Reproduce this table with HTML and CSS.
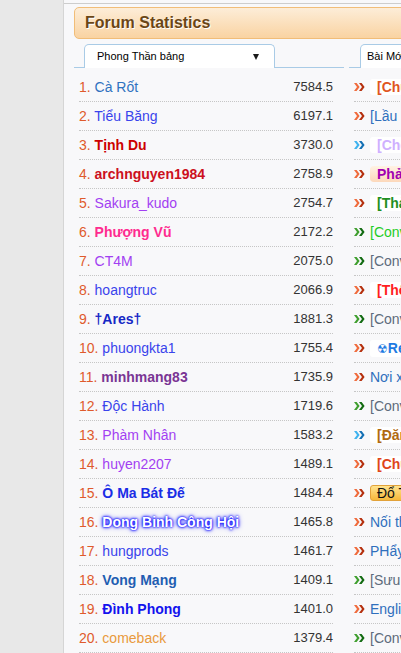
FILE: index.html
```html
<!DOCTYPE html>
<html lang="vi">
<head>
<meta charset="utf-8">
<title>Forum Statistics</title>
<link rel="stylesheet" href="styles.css">
</head>
<body>
<div class="page">
  <aside class="sidebar"></aside>
  <main class="content">
    <div class="content-inner">
      <div class="panel-head"><h2 class="panel-title">Forum Statistics</h2></div>
      <div class="cols">
        <section class="col col-rank">
          <div class="tabbar"><div class="tab tab-rank"><span>Phong Thần bảng</span><span class="caret"></span></div></div>
          <ol class="list list-rank">
            <li class="row"><span><span class="rank">1.</span> <a class="name u-steel">Cà Rốt</a></span><span class="score">7584.5</span></li>
            <li class="row"><span><span class="rank">2.</span> <a class="name u-blue">Tiểu Băng</a></span><span class="score">6197.1</span></li>
            <li class="row"><span><span class="rank">3.</span> <a class="name u-red b">Tịnh Du</a></span><span class="score">3730.0</span></li>
            <li class="row"><span><span class="rank">4.</span> <a class="name u-red2 b">archnguyen1984</a></span><span class="score">2758.9</span></li>
            <li class="row"><span><span class="rank">5.</span> <a class="name u-purple">Sakura_kudo</a></span><span class="score">2754.7</span></li>
            <li class="row"><span><span class="rank">6.</span> <a class="name u-pink b">Phượng Vũ</a></span><span class="score">2172.2</span></li>
            <li class="row"><span><span class="rank">7.</span> <a class="name u-purple">CT4M</a></span><span class="score">2075.0</span></li>
            <li class="row"><span><span class="rank">8.</span> <a class="name u-blue">hoangtruc</a></span><span class="score">2066.9</span></li>
            <li class="row"><span><span class="rank">9.</span> <a class="name u-navy b">†Ares†</a></span><span class="score">1881.3</span></li>
            <li class="row"><span><span class="rank">10.</span> <a class="name u-blue">phuongkta1</a></span><span class="score">1755.4</span></li>
            <li class="row"><span><span class="rank">11.</span> <a class="name u-plum b">minhmang83</a></span><span class="score">1735.9</span></li>
            <li class="row"><span><span class="rank">12.</span> <a class="name u-blue">Độc Hành</a></span><span class="score">1719.6</span></li>
            <li class="row"><span><span class="rank">13.</span> <a class="name u-purple">Phàm Nhân</a></span><span class="score">1583.2</span></li>
            <li class="row"><span><span class="rank">14.</span> <a class="name u-purple">huyen2207</a></span><span class="score">1489.1</span></li>
            <li class="row"><span><span class="rank">15.</span> <a class="name u-royal b">Ô Ma Bát Đế</a></span><span class="score">1484.4</span></li>
            <li class="row"><span><span class="rank">16.</span> <a class="name u-glow">Dong Binh Công Hội</a></span><span class="score">1465.8</span></li>
            <li class="row"><span><span class="rank">17.</span> <a class="name u-blue">hungprods</a></span><span class="score">1461.7</span></li>
            <li class="row"><span><span class="rank">18.</span> <a class="name u-sky b">Vong Mạng</a></span><span class="score">1409.1</span></li>
            <li class="row"><span><span class="rank">19.</span> <a class="name u-royal2 b">Đình Phong</a></span><span class="score">1401.0</span></li>
            <li class="row"><span><span class="rank">20.</span> <a class="name u-orange">comeback</a></span><span class="score">1379.4</span></li>
          </ol>
        </section>
        <section class="col col-new">
          <div class="tabbar"><div class="tab tab-new">Bài Mới</div></div>
          <ul class="list list-new">
            <li class="row"><svg class="arr arr-o" viewBox="0 0 11 8" width="11" height="8"><polygon class="a" points="0,0 2.6,0 5.6,4 2.6,8 0,8 3,4"/><polygon class="b" points="5,0 7.6,0 10.6,4 7.6,8 5,8 8,4"/></svg><span class="box c-orange">[Chủ đề] Thông báo</span></li>
            <li class="row"><svg class="arr arr-o" viewBox="0 0 11 8" width="11" height="8"><polygon class="a" points="0,0 2.6,0 5.6,4 2.6,8 0,8 3,4"/><polygon class="b" points="5,0 7.6,0 10.6,4 7.6,8 5,8 8,4"/></svg><span class="t-blue">[Lầu Xanh] Tán gẫu</span></li>
            <li class="row"><svg class="arr arr-b" viewBox="0 0 11 8" width="11" height="8"><polygon class="a" points="0,0 2.6,0 5.6,4 2.6,8 0,8 3,4"/><polygon class="b" points="5,0 7.6,0 10.6,4 7.6,8 5,8 8,4"/></svg><span class="box c-lilac">[Chế tác] Hình ảnh</span></li>
            <li class="row"><svg class="arr arr-o" viewBox="0 0 11 8" width="11" height="8"><polygon class="a" points="0,0 2.6,0 5.6,4 2.6,8 0,8 3,4"/><polygon class="b" points="5,0 7.6,0 10.6,4 7.6,8 5,8 8,4"/></svg><span class="box box-peach c-magenta">Phản hồi</span></li>
            <li class="row"><svg class="arr arr-o" viewBox="0 0 11 8" width="11" height="8"><polygon class="a" points="0,0 2.6,0 5.6,4 2.6,8 0,8 3,4"/><polygon class="b" points="5,0 7.6,0 10.6,4 7.6,8 5,8 8,4"/></svg><span class="box c-green">[Thảo luận] Truyện</span></li>
            <li class="row"><svg class="arr arr-g" viewBox="0 0 11 8" width="11" height="8"><polygon class="a" points="0,0 2.6,0 5.6,4 2.6,8 0,8 3,4"/><polygon class="b" points="5,0 7.6,0 10.6,4 7.6,8 5,8 8,4"/></svg><span class="t-lime">[Convert] Truyện mới</span></li>
            <li class="row"><svg class="arr arr-g" viewBox="0 0 11 8" width="11" height="8"><polygon class="a" points="0,0 2.6,0 5.6,4 2.6,8 0,8 3,4"/><polygon class="b" points="5,0 7.6,0 10.6,4 7.6,8 5,8 8,4"/></svg><span class="t-gray">[Convert] Truyện</span></li>
            <li class="row"><svg class="arr arr-o" viewBox="0 0 11 8" width="11" height="8"><polygon class="a" points="0,0 2.6,0 5.6,4 2.6,8 0,8 3,4"/><polygon class="b" points="5,0 7.6,0 10.6,4 7.6,8 5,8 8,4"/></svg><span class="box c-red">[Thông báo] Mới</span></li>
            <li class="row"><svg class="arr arr-g" viewBox="0 0 11 8" width="11" height="8"><polygon class="a" points="0,0 2.6,0 5.6,4 2.6,8 0,8 3,4"/><polygon class="b" points="5,0 7.6,0 10.6,4 7.6,8 5,8 8,4"/></svg><span class="t-gray">[Convert] Truyện</span></li>
            <li class="row"><svg class="arr arr-o" viewBox="0 0 11 8" width="11" height="8"><polygon class="a" points="0,0 2.6,0 5.6,4 2.6,8 0,8 3,4"/><polygon class="b" points="5,0 7.6,0 10.6,4 7.6,8 5,8 8,4"/></svg><span class="box c-azure"><span class="sym">☢</span>Review</span></li>
            <li class="row"><svg class="arr arr-o" viewBox="0 0 11 8" width="11" height="8"><polygon class="a" points="0,0 2.6,0 5.6,4 2.6,8 0,8 3,4"/><polygon class="b" points="5,0 7.6,0 10.6,4 7.6,8 5,8 8,4"/></svg><span class="t-blue">Nơi xả stress</span></li>
            <li class="row"><svg class="arr arr-g" viewBox="0 0 11 8" width="11" height="8"><polygon class="a" points="0,0 2.6,0 5.6,4 2.6,8 0,8 3,4"/><polygon class="b" points="5,0 7.6,0 10.6,4 7.6,8 5,8 8,4"/></svg><span class="t-gray">[Convert] Truyện</span></li>
            <li class="row"><svg class="arr arr-b" viewBox="0 0 11 8" width="11" height="8"><polygon class="a" points="0,0 2.6,0 5.6,4 2.6,8 0,8 3,4"/><polygon class="b" points="5,0 7.6,0 10.6,4 7.6,8 5,8 8,4"/></svg><span class="box c-brown">[Đăng ký] Tham gia</span></li>
            <li class="row"><svg class="arr arr-o" viewBox="0 0 11 8" width="11" height="8"><polygon class="a" points="0,0 2.6,0 5.6,4 2.6,8 0,8 3,4"/><polygon class="b" points="5,0 7.6,0 10.6,4 7.6,8 5,8 8,4"/></svg><span class="box c-orange2">[Chủ đề] Thảo luận</span></li>
            <li class="row"><svg class="arr arr-o" viewBox="0 0 11 8" width="11" height="8"><polygon class="a" points="0,0 2.6,0 5.6,4 2.6,8 0,8 3,4"/><polygon class="b" points="5,0 7.6,0 10.6,4 7.6,8 5,8 8,4"/></svg><span class="badge-gold">Đổ Thạch</span></li>
            <li class="row"><svg class="arr arr-o" viewBox="0 0 11 8" width="11" height="8"><polygon class="a" points="0,0 2.6,0 5.6,4 2.6,8 0,8 3,4"/><polygon class="b" points="5,0 7.6,0 10.6,4 7.6,8 5,8 8,4"/></svg><span class="t-blue">Nối thơ</span></li>
            <li class="row"><svg class="arr arr-o" viewBox="0 0 11 8" width="11" height="8"><polygon class="a" points="0,0 2.6,0 5.6,4 2.6,8 0,8 3,4"/><polygon class="b" points="5,0 7.6,0 10.6,4 7.6,8 5,8 8,4"/></svg><span class="t-blue">PHẩy</span></li>
            <li class="row"><svg class="arr arr-g" viewBox="0 0 11 8" width="11" height="8"><polygon class="a" points="0,0 2.6,0 5.6,4 2.6,8 0,8 3,4"/><polygon class="b" points="5,0 7.6,0 10.6,4 7.6,8 5,8 8,4"/></svg><span class="t-gray">[Sưu tầm] Truyện</span></li>
            <li class="row"><svg class="arr arr-o" viewBox="0 0 11 8" width="11" height="8"><polygon class="a" points="0,0 2.6,0 5.6,4 2.6,8 0,8 3,4"/><polygon class="b" points="5,0 7.6,0 10.6,4 7.6,8 5,8 8,4"/></svg><span class="t-blue">English</span></li>
            <li class="row"><svg class="arr arr-g" viewBox="0 0 11 8" width="11" height="8"><polygon class="a" points="0,0 2.6,0 5.6,4 2.6,8 0,8 3,4"/><polygon class="b" points="5,0 7.6,0 10.6,4 7.6,8 5,8 8,4"/></svg><span class="t-gray">[Convert] Truyện</span></li>
          </ul>
        </section>
      </div>
    </div>
  </main>
</div>
</body>
</html>
```
FILE: styles.css
```css
html, body {
  margin: 0;
  overflow: hidden;
}
body {
  font-family: "Liberation Sans", Arial, sans-serif;
  background: #f8f8fa;
  color: #333;
}
.page {
  display: flex;
  width: 760px;
  height: 653px;
}
.sidebar {
  width: 63px;
  flex: none;
  background: #e8e8e8;
  border-right: 1px solid #d5d5d5;
}
.content {
  flex: 1;
  padding-top: 3px;
  background: #f8f8fa;
}
.content-inner {
  border-top: 1px solid #cdcdcd;
  padding: 3px 0 0 10px;
}
.panel-head {
  height: 30px;
  border: 1px solid #f1bd78;
  border-radius: 5px;
  background: linear-gradient(#fdedd8, #f9d3a2);
  padding-left: 10px;
}
.panel-title {
  margin: 0;
  font-size: 16px;
  font-weight: bold;
  line-height: 30px;
  color: #6a4616;
  text-shadow: 1px 1px 0 #fff;
}
.cols {
  display: flex;
  gap: 5px;
  margin-top: 5px;
}
.col-rank {
  width: 270px;
  flex: none;
}
.col-new {
  flex: 1;
}
.tabbar {
  height: 23px;
  border-bottom: 1px solid #a9cbe6;
  padding-left: 10px;
}
.col-new .tabbar {
  padding-left: 11px;
}
.tab {
  height: 23px;
  border: 1px solid #a9cbe6;
  border-bottom: 0;
  border-radius: 5px 5px 0 0;
  background: #fff;
  font-size: 11px;
  line-height: 23px;
  color: #000;
  white-space: nowrap;
}
.tab-rank {
  width: 162px;
  padding: 0 15px 0 12px;
  display: flex;
  align-items: center;
  justify-content: space-between;
}
.tab-new {
  display: inline-block;
  padding: 0 40px 0 6px;
}
.caret {
  width: 0;
  height: 0;
  border-left: 3px solid transparent;
  border-right: 3px solid transparent;
  border-top: 6px solid #1a1a1a;
}
.list {
  list-style: none;
  margin: 0;
  padding: 5px 0 0 5px;
}
.list-rank {
  padding-right: 11px;
}
.row {
  height: 28px;
  line-height: 28px;
  border-bottom: 1px dotted #c6c6c6;
  white-space: nowrap;
  font-size: 14px;
}
.list-rank .row {
  display: flex;
  justify-content: space-between;
}
.list-new .row {
  display: flex;
  align-items: center;
  gap: 5px;
}
.rank {
  color: #df5a2c;
}
.name {
  text-decoration: none;
}
.b { font-weight: bold; }
.score {
  font-size: 13px;
  color: #333;
}
.u-steel { color: #2f72c0; }
.u-blue { color: #3a44ec; }
.u-red { color: #cc0000; }
.u-red2 { color: #cc1020; }
.u-purple { color: #a23ff2; }
.u-pink { color: #ff2b8f; }
.u-navy { color: #1628c6; }
.u-plum { color: #7a3594; }
.u-royal { color: #1a2de6; }
.u-royal2 { color: #1212ee; }
.u-sky { color: #1f5eb2; }
.u-orange { color: #e99a3c; }
.u-glow {
  color: #fff;
  font-weight: bold;
  text-shadow: 0 0 2px #0000ff, 0 0 3px #0000ff, 0 0 5px #3333ff;
}
.arr {
  flex: none;
}
.arr-o .a { fill: #f06b3c; }
.arr-o .b { fill: #b5300e; }
.arr-b .a { fill: #3fb3ef; }
.arr-b .b { fill: #1470b5; }
.arr-g .a { fill: #3f9f2e; }
.arr-g .b { fill: #126b12; }
.t-blue { color: #2f6fbd; }
.t-gray { color: #5d6b7b; }
.t-lime { color: #1fcc1f; }
.box {
  background: #fff;
  padding: 0 6px 0 7px;
  line-height: 16px;
  border-radius: 3px;
  font-weight: bold;
}
.box-peach {
  background: linear-gradient(#fff2e4, #fcd8bb);
  border-radius: 4px;
}
.c-orange { color: #e0561f; }
.c-orange2 { color: #e0461a; }
.c-lilac { color: #cfb0ff; }
.c-magenta { color: #a000b0; }
.c-green { color: #1f8f1f; }
.c-red { color: #ff1e1e; }
.c-azure { color: #1e7be2; }
.c-brown { color: #b06a10; }
.sym {
  font-family: "DejaVu Sans", sans-serif;
  font-size: 12px;
}
.badge-gold {
  line-height: 14px;
  padding: 0 6px 0 6px;
  border: 1px solid #e2a23a;
  border-radius: 3px;
  background: linear-gradient(#ffe38e, #f6b83a);
  color: #111;
}
```
